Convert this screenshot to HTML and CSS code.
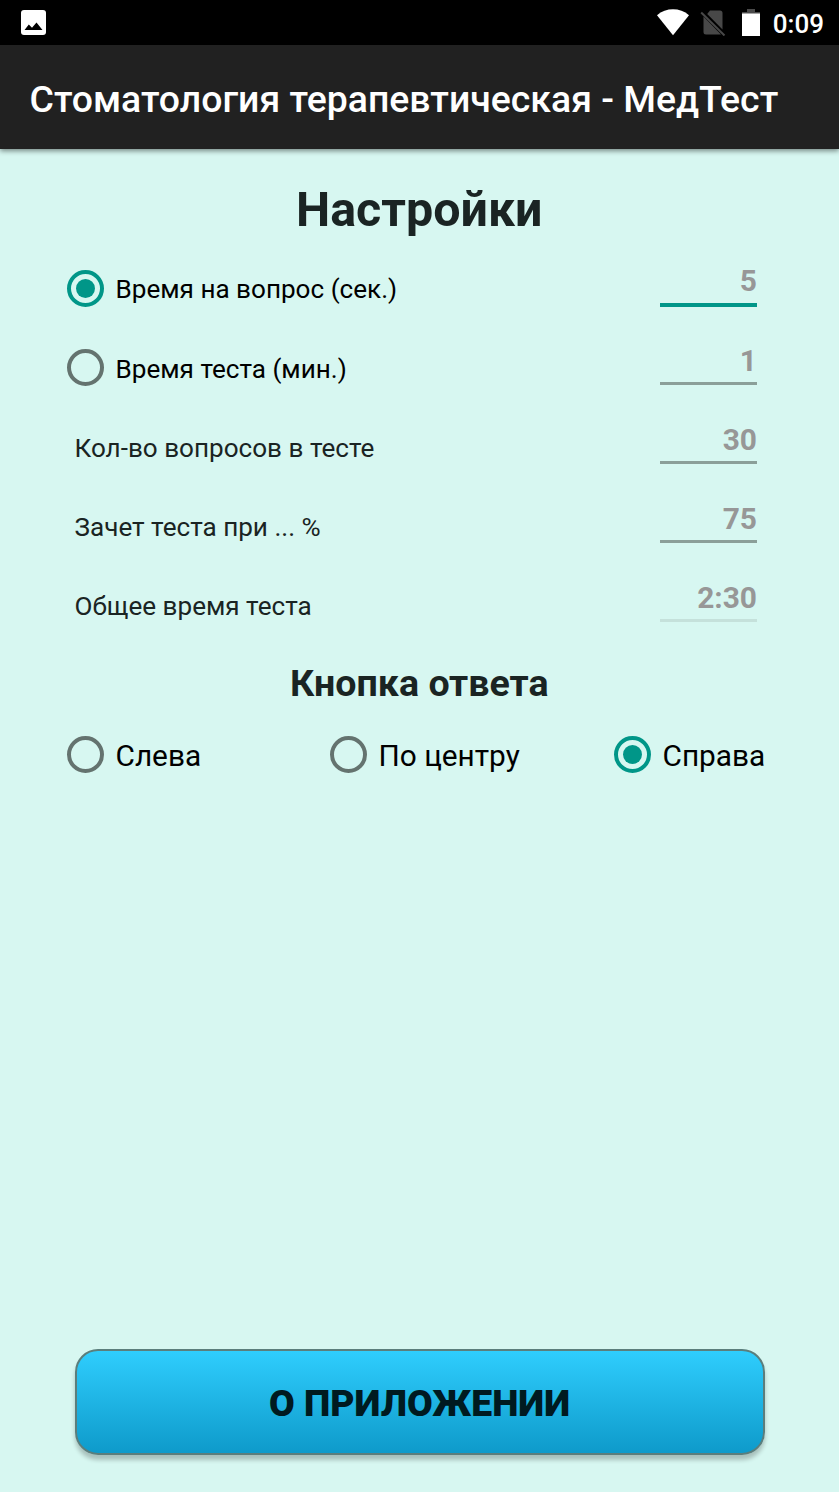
FILE: index.html
```html
<!DOCTYPE html>
<html lang="ru">
<head>
    <meta charset="UTF-8">
    <title>Стоматология терапевтическая - МедТест</title>
    <link rel="stylesheet" href="styles.css">
</head>
<body>
    <!-- Строка состояния -->
    <div class="status-bar">
        <svg class="icon-image" width="25" height="25" viewBox="0 0 25 25">
            <rect width="25" height="25" rx="3" fill="#fff"/>
            <path d="M3.5 20 7.8 14.5 11 17.8 15.5 12.5 21.5 20Z" fill="#000"/>
        </svg>
        <div class="status-right">
            <svg class="icon-wifi" width="34" height="27" viewBox="0 0 34 27">
                <path d="M1 6.2C10-1.7 24-1.7 33 6.2L17 26.2Z" fill="#fff"/>
            </svg>
            <svg class="icon-sim" width="26" height="27" viewBox="0 0 26 27">
                <path d="M10 1.5H20Q22.5 1.5 22.5 4V20.5L7.2 5ZM3.5 7.5 21 25.5H6Q3.5 25.5 3.5 23Z" fill="#484848"/>
                <path d="M1.2 3.5 24.5 26.5" stroke="#484848" stroke-width="2"/>
            </svg>
            <svg class="icon-battery" width="18" height="27" viewBox="0 0 18 27">
                <path d="M5 0H13V3H18V5H0V3H5Z" fill="#4a4a4a"/>
                <rect y="4.5" width="18" height="22.5" fill="#fff"/>
            </svg>
            <span class="clock">0:09</span>
        </div>
    </div>

    <div class="app-bar">Стоматология терапевтическая - МедТест</div>

    <div class="content">
        <h1>Настройки</h1>

        <div class="row">
            <div class="radio checked"></div>
            <span class="label label-radio">Время на вопрос (сек.)</span>
            <div class="field active">5</div>
        </div>
        <div class="row">
            <div class="radio"></div>
            <span class="label label-radio">Время теста (мин.)</span>
            <div class="field">1</div>
        </div>
        <div class="row">
            <span class="label label-text">Кол-во вопросов в тесте</span>
            <div class="field">30</div>
        </div>
        <div class="row">
            <span class="label label-text">Зачет теста при ... %</span>
            <div class="field">75</div>
        </div>
        <div class="row">
            <span class="label label-text">Общее время теста</span>
            <div class="field disabled">2:30</div>
        </div>

        <h2>Кнопка ответа</h2>

        <div class="position">
            <div class="option"><div class="radio"></div><span>Слева</span></div>
            <div class="option"><div class="radio"></div><span>По центру</span></div>
            <div class="option"><div class="radio checked"></div><span>Справа</span></div>
        </div>

        <div class="about">О ПРИЛОЖЕНИИ</div>
    </div>
</body>
</html>
```
FILE: styles.css
```css
* { margin: 0; padding: 0; box-sizing: border-box; }
body {
    display: flex;
    flex-direction: column;
    height: 100vh;
    background: #d7f7f1;
    color: #1a2423;
    font-family: Roboto, sans-serif;
    overflow: hidden;
}

/* Строка состояния */
.status-bar {
    display: flex;
    align-items: center;
    justify-content: space-between;
    height: 45px;
    padding: 0 15px 0 21px;
    background: #000;
}

.status-right {
    display: flex;
    align-items: center;
}

.icon-sim { margin-left: 10px; }
.icon-battery { margin-left: 16px; }

.clock {
    margin-left: 13px;
    padding-top: 3px;
    color: #fff;
    font-size: 26px;
    font-weight: 500;
    line-height: 45px;
}

.app-bar {
    height: 104px;
    padding-left: 29.5px;
    background: #212121;
    color: #fff;
    font-size: 37.4px;
    font-weight: 500;
    line-height: 108px;
    white-space: nowrap;
    box-shadow: 0 2px 5px rgba(0, 0, 0, 0.45);
}

.content {
    display: flex;
    flex-direction: column;
    flex: 1;
    padding: 33px 75px 37.5px 67px;
}

h1 {
    height: 66.6px;
    margin-left: 7.5px;
    font-size: 48.4px;
    line-height: 56px;
    text-align: center;
}

/* Строки настроек */
.row {
    display: flex;
    align-items: center;
    height: 79.3px;
    padding-right: 7px;
}

.label {
    padding-top: 2px;
    font-size: 26.1px;
}
.label-radio { margin-left: 11.5px; color: #000; }
.label-text { margin-left: 7.5px; }

.radio {
    display: flex;
    align-items: center;
    justify-content: center;
    width: 37px;
    height: 37px;
    border: 4px solid #64736f;
    border-radius: 50%;
}

.radio.checked { border-color: #009688; }
.radio.checked::after {
    content: "";
    width: 19px;
    height: 19px;
    border-radius: 50%;
    background: #009688;
}

.field {
    width: 97px;
    height: 50px;
    margin-left: auto;
    margin-top: -16px;
    border-bottom: 3px solid #8b9f99;
    color: #979797;
    font-size: 29.9px;
    font-weight: bold;
    line-height: 52px;
    text-align: right;
}

.field.active {
    height: 52px;
    margin-top: -14px;
    border-bottom: 4px solid #009688;
}
.field.disabled { border-color: #c5e1db; }

h2 {
    height: 56px;
    margin-left: 7.5px;
    font-size: 37.6px;
    line-height: 77px;
    text-align: center;
}

/* Положение кнопки ответа */
.position {
    display: grid;
    grid-template-columns: 263px 284px auto;
    margin-top: 34.6px;
}

.option {
    display: flex;
    align-items: center;
    color: #000;
    font-size: 29.8px;
    white-space: nowrap;
}
.option span {
    margin-left: 11.5px;
    padding-top: 2px;
}

.about {
    height: 106px;
    margin-top: auto;
    margin-left: 7.5px;
    margin-right: -0.5px;
    border: 2px solid #5b7e7c;
    border-radius: 23px;
    background: linear-gradient(#2fcdfd, #0e9aca);
    box-shadow: 0 5px 4px rgba(0, 0, 0, 0.22);
    color: #001a20;
    font-size: 37.3px;
    font-weight: 900;
    line-height: 105px;
    text-align: center;
}
```
